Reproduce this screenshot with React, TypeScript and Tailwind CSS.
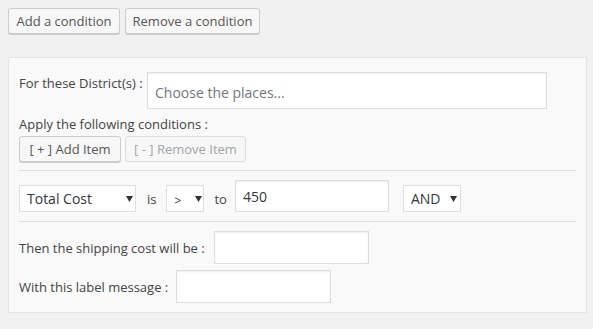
import React from 'react';

const Arrow = () => (
  <svg width="7" height="6" viewBox="0 0 7 6" className="shrink-0">
    <path d="M0 0 L7 0 L3.5 6 Z" fill="#333" />
  </svg>
);

const Select = ({ value, width, arrowGap }: { value: string; width: string; arrowGap: string }) => (
  <div className={`${width} h-[27px] bg-white border border-[#dddddd] flex items-center pl-[7px] text-[14px] text-[#32373c] shrink-0`}>
    <span className={arrowGap}>{value}</span>
    <Arrow />
  </div>
);

const App: React.FC = () => {
  const btn = "h-[26px] px-0 bg-[#f7f7f7] border border-[#cccccc] rounded-[3px] shadow-[0_1px_0_#cccccc] text-[13px] text-[#555555] leading-[24px] whitespace-nowrap shrink-0";
  const input = "bg-white border border-[#dddddd] shadow-[inset_0_1px_2px_rgba(0,0,0,0.07)] shrink-0";
  const label = "text-[13px] text-[#444444] leading-[18px] whitespace-nowrap shrink-0";

  return (
    <div className="w-[593px] h-[329px] bg-[#f1f1f1] font-['Open_Sans',sans-serif] pt-[8px] pl-[8px] pr-[6px] overflow-hidden">
      <div className="flex gap-[5px]">
        <button className={`${btn} w-[112px]`}>Add a condition</button>
        <button className={`${btn} w-[135px]`}>Remove a condition</button>
      </div>

      <div className="mt-[23px] h-[256px] bg-[#f9f9f9] border border-[#e5e5e5] pt-[14px] pl-[10px] pr-[10px]">
        <div className="flex items-start">
          <span className={`${label} mt-[2px] w-[128px]`}>For these District(s) :</span>
          <div className={`${input} w-[400px] h-[37px] flex items-center pl-[7px] pt-[4px] text-[14px] text-[#72777c]`}>
            Choose the places...
          </div>
        </div>

        <div className={`${label} mt-[6px]`}>Apply the following conditions :</div>
        <div className="flex gap-[4px] mt-[3px]">
          <button className={`${btn} w-[102px]`}>[ + ] Add Item</button>
          <button className="h-[26px] w-[121px] bg-[#f7f7f7] border border-[#dddddd] rounded-[3px] text-[13px] text-[#a0a5aa] leading-[24px] whitespace-nowrap">[ - ] Remove Item</button>
        </div>

        <div className="mt-[8px] h-px bg-[#dddddd]" />

        <div className="flex items-end mt-[9px]">
          <Select value="Total Cost" width="w-[117px]" arrowGap="w-[99px]" />
          <span className={`${label} ml-[11px] h-[27px] flex items-center`}>is</span>
          <Select value=">" width="ml-[10px] w-[38px]" arrowGap="w-[21px] text-[12px] pt-[4px]" />
          <span className={`${label} ml-[10px] h-[27px] flex items-center`}>to</span>
          <div className={`${input} ml-[8px] w-[154px] h-[32px] flex items-center pl-[7px] text-[14px] text-[#32373c]`}>450</div>
          <Select value="AND" width="ml-[14px] w-[58px]" arrowGap="w-[39px]" />
        </div>

        <div className="mt-[9px] h-px bg-[#dddddd]" />

        <div className="flex items-center mt-[9px]">
          <span className={`${label} w-[195px]`}>Then the shipping cost will be :</span>
          <div className={`${input} w-[155px] h-[33px]`} />
        </div>
        <div className="flex items-center mt-[6px]">
          <span className={`${label} w-[157px]`}>With this label message :</span>
          <div className={`${input} w-[155px] h-[33px]`} />
        </div>
      </div>
    </div>
  );
};

export default App;
